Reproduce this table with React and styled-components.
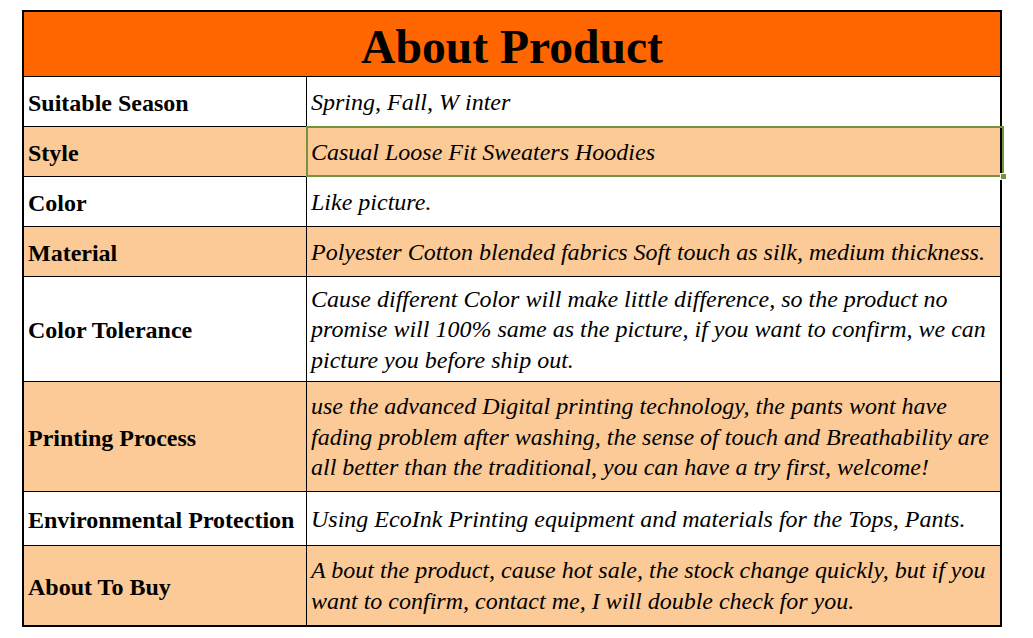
import React from "react";
import styled, { createGlobalStyle } from "styled-components";

const Global = createGlobalStyle`
  html, body { margin: 0; padding: 0; background: #fff; }
  body { font-family: "Liberation Serif", "Times New Roman", serif; color: #000; }
`;

const Page = styled.div`
  width: 1033px;
  height: 638px;
  padding: 10px 0 0 22px;
  box-sizing: border-box;
`;

const Table = styled.div`
  width: 980px;
  border: 2px solid #000;
  box-sizing: border-box;
  display: flex;
  flex-direction: column;
`;

const Header = styled.div`
  height: 64px;
  background: #ff6600;
  display: flex;
  align-items: center;
  justify-content: center;
  font-weight: bold;
  font-size: 47.6px;
  padding-top: 6px;
  box-sizing: border-box;
`;

const Row = styled.div`
  display: grid;
  grid-template-columns: 283px 1fr;
  height: ${(p) => p.$h}px;
  border-top: 1px solid #000;
  background: ${(p) => (p.$alt ? "#fbca96" : "#fff")};
  box-sizing: border-box;
`;

const Label = styled.div`
  display: flex;
  align-items: center;
  padding: 3px 0 0 4px;
  font-weight: bold;
  font-size: 24px;
  border-right: 1px solid #000;
  white-space: nowrap;
`;

const Value = styled.div`
  position: relative;
  display: flex;
  align-items: center;
  padding: 1px 4px 0 4px;
  font-style: italic;
  font-size: 24px;
  line-height: 30.6px;
  ${(p) =>
    p.$selected &&
    `
    outline: 2px solid #76923c;
    outline-offset: -1px;
    margin-right: -3px;
  `}
`;

const Handle = styled.span`
  position: absolute;
  right: -4px;
  bottom: -4px;
  width: 5px;
  height: 5px;
  background: #76923c;
  border: 1px solid #fff;
`;

const rows = [
  { label: "Suitable Season", value: "Spring, Fall, W inter", h: 50 },
  { label: "Style", value: "Casual Loose Fit Sweaters Hoodies", h: 50, alt: true, selected: true },
  { label: "Color", value: "Like picture.", h: 50 },
  { label: "Material", value: "Polyester Cotton blended fabrics Soft touch as silk, medium thickness.", h: 50, alt: true },
  {
    label: "Color Tolerance",
    value:
      "Cause different Color will make little difference, so the product no promise will 100% same as the picture, if you want to confirm, we can picture you before ship out.",
    h: 105,
  },
  {
    label: "Printing Process",
    value:
      "use the advanced Digital printing technology, the pants wont have fading problem after washing, the sense of touch and Breathability are all better than the traditional, you can have a try first, welcome!",
    h: 110,
    alt: true,
  },
  { label: "Environmental Protection", value: "Using EcoInk Printing equipment and materials for the Tops, Pants.", h: 54 },
  {
    label: "About To Buy",
    value: "A bout the product, cause hot sale, the stock change quickly, but if you want to confirm, contact me, I will double check for you.",
    h: 80,
    alt: true,
  },
];

export default function App() {
  return (
    <Page>
      <Global />
      <Table>
        <Header>About Product</Header>
        {rows.map((r) => (
          <Row key={r.label} $h={r.h} $alt={r.alt}>
            <Label>{r.label}</Label>
            <Value $selected={r.selected}>
              <span>{r.value}</span>
              {r.selected && <Handle />}
            </Value>
          </Row>
        ))}
      </Table>
    </Page>
  );
}
